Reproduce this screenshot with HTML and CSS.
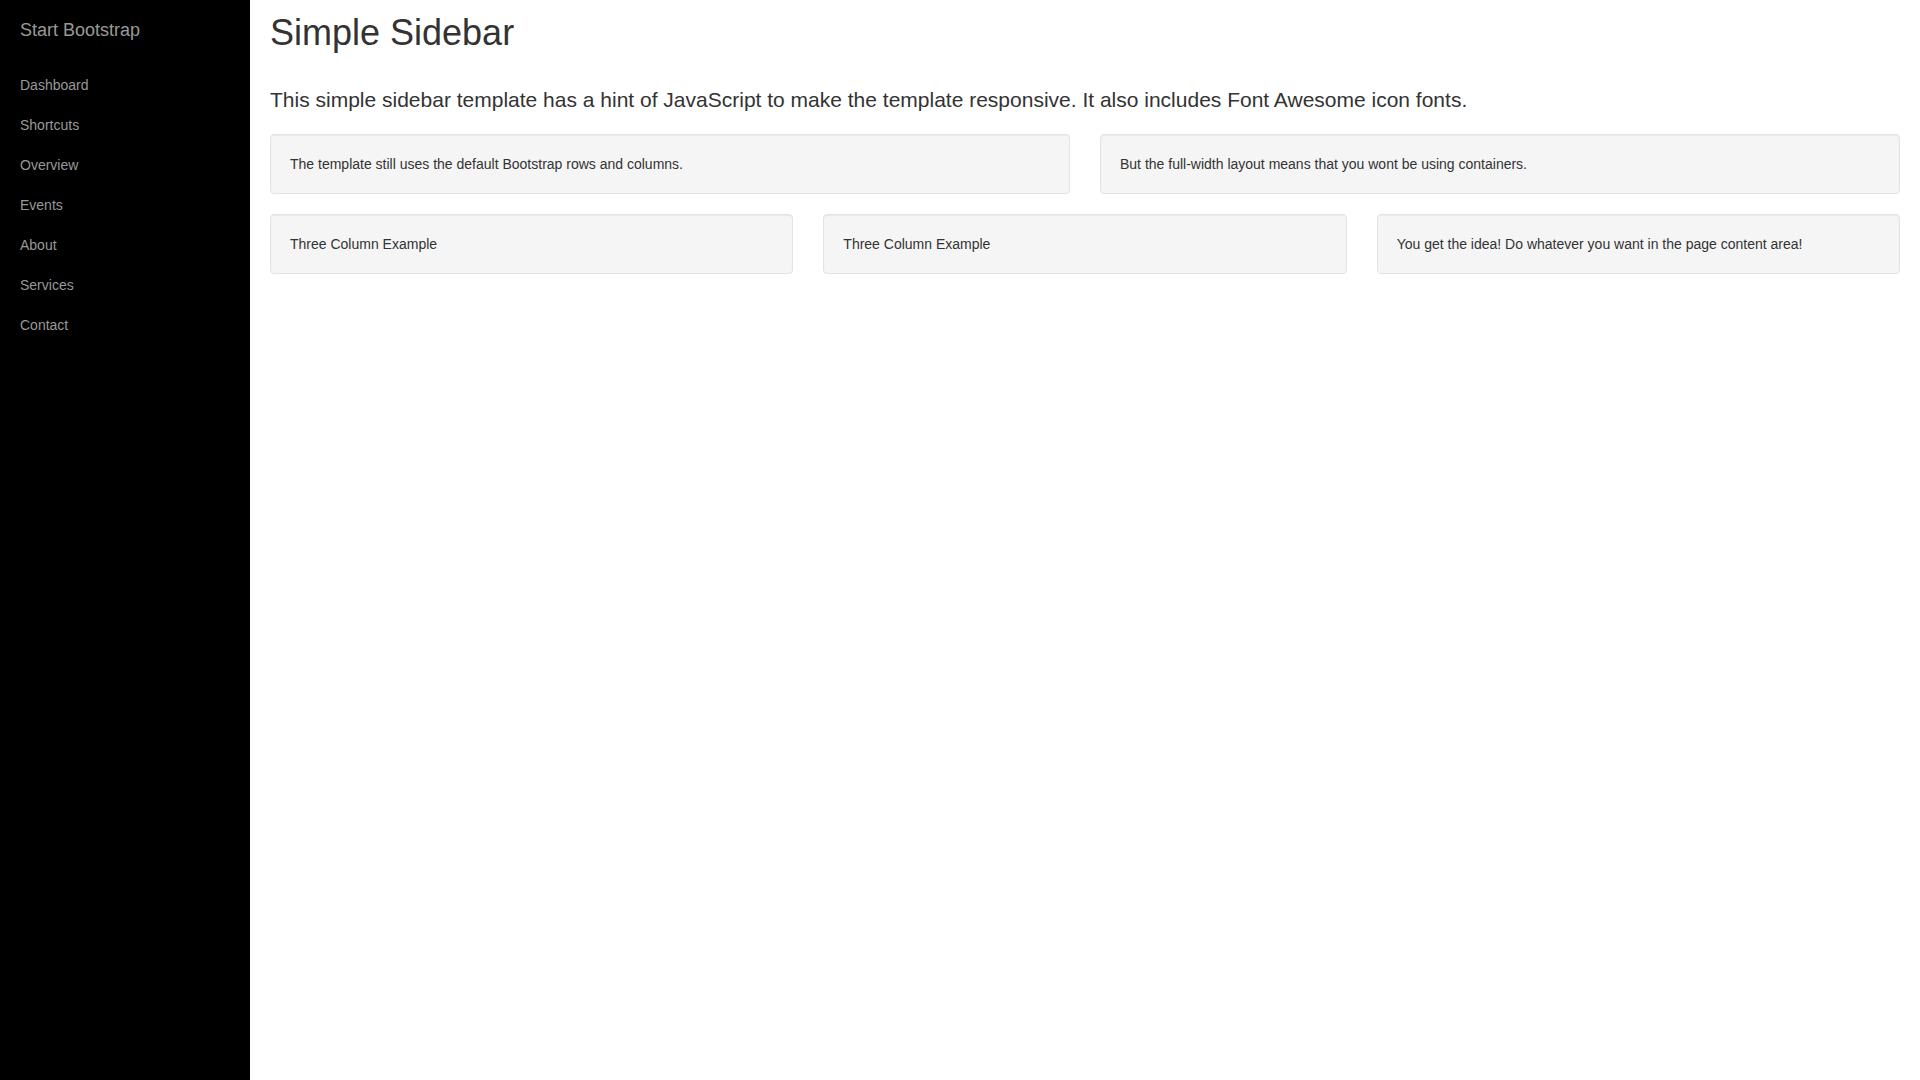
FILE: index.html
```html
<!DOCTYPE html>
<html lang="en">
<head>
<meta charset="utf-8">
<title>Simple Sidebar - Start Bootstrap Template</title>
<link rel="stylesheet" href="styles.css">
</head>
<body>
<div class="wrapper">
  <nav class="sidebar">
    <ul class="sidebar-nav">
      <li class="sidebar-brand"><a href="#">Start Bootstrap</a></li>
      <li><a href="#">Dashboard</a></li>
      <li><a href="#">Shortcuts</a></li>
      <li><a href="#">Overview</a></li>
      <li><a href="#">Events</a></li>
      <li><a href="#">About</a></li>
      <li><a href="#">Services</a></li>
      <li><a href="#">Contact</a></li>
    </ul>
  </nav>
  <main class="content">
    <h1 class="title">Simple Sidebar</h1>
    <p class="lead">This simple sidebar template has a hint of JavaScript to make the template responsive. It also includes Font Awesome icon fonts.</p>
    <div class="row row-2">
      <div class="well">The template still uses the default Bootstrap rows and columns.</div>
      <div class="well">But the full-width layout means that you wont be using containers.</div>
    </div>
    <div class="row row-3">
      <div class="well">Three Column Example</div>
      <div class="well">Three Column Example</div>
      <div class="well">You get the idea! Do whatever you want in the page content area!</div>
    </div>
  </main>
</div>
</body>
</html>
```
FILE: styles.css
```css
* { box-sizing: border-box; }
html, body { margin: 0; padding: 0; height: 100%; }
body {
  font-family: "Liberation Sans", Arial, Helvetica, sans-serif;
  font-size: 14px;
  line-height: 1.42857143;
  color: #333;
  background: #fff;
}
.wrapper {
  display: flex;
  min-height: 100vh;
}
.sidebar {
  width: 250px;
  flex: 0 0 250px;
  background: #000;
  min-height: 100vh;
}
.sidebar-nav {
  list-style: none;
  margin: 0;
  padding: 0;
}
.sidebar-nav li {
  line-height: 40px;
  text-indent: 20px;
}
.sidebar-nav li a {
  display: block;
  color: #999;
  text-decoration: none;
}
.sidebar-nav .sidebar-brand {
  height: 65px;
  font-size: 18px;
  line-height: 60px;
}
.content {
  flex: 1;
  padding: 0 20px 20px;
}
.title {
  font-size: 36px;
  font-weight: 500;
  line-height: 1.1;
  margin: 13px 0 32px;
  color: #333;
}
.lead {
  font-size: 21px;
  font-weight: 300;
  line-height: 1.4;
  margin: 0 0 20px;
}
.row {
  display: grid;
  column-gap: 30px;
}
.row-2 { grid-template-columns: 1fr 1fr; }
.row-3 { grid-template-columns: 1fr 1fr 1fr; }
.well {
  min-height: 20px;
  padding: 19px;
  margin-bottom: 20px;
  background: #f5f5f5;
  border: 1px solid #e3e3e3;
  border-radius: 4px;
  box-shadow: inset 0 1px 1px rgba(0, 0, 0, .05);
}
```
